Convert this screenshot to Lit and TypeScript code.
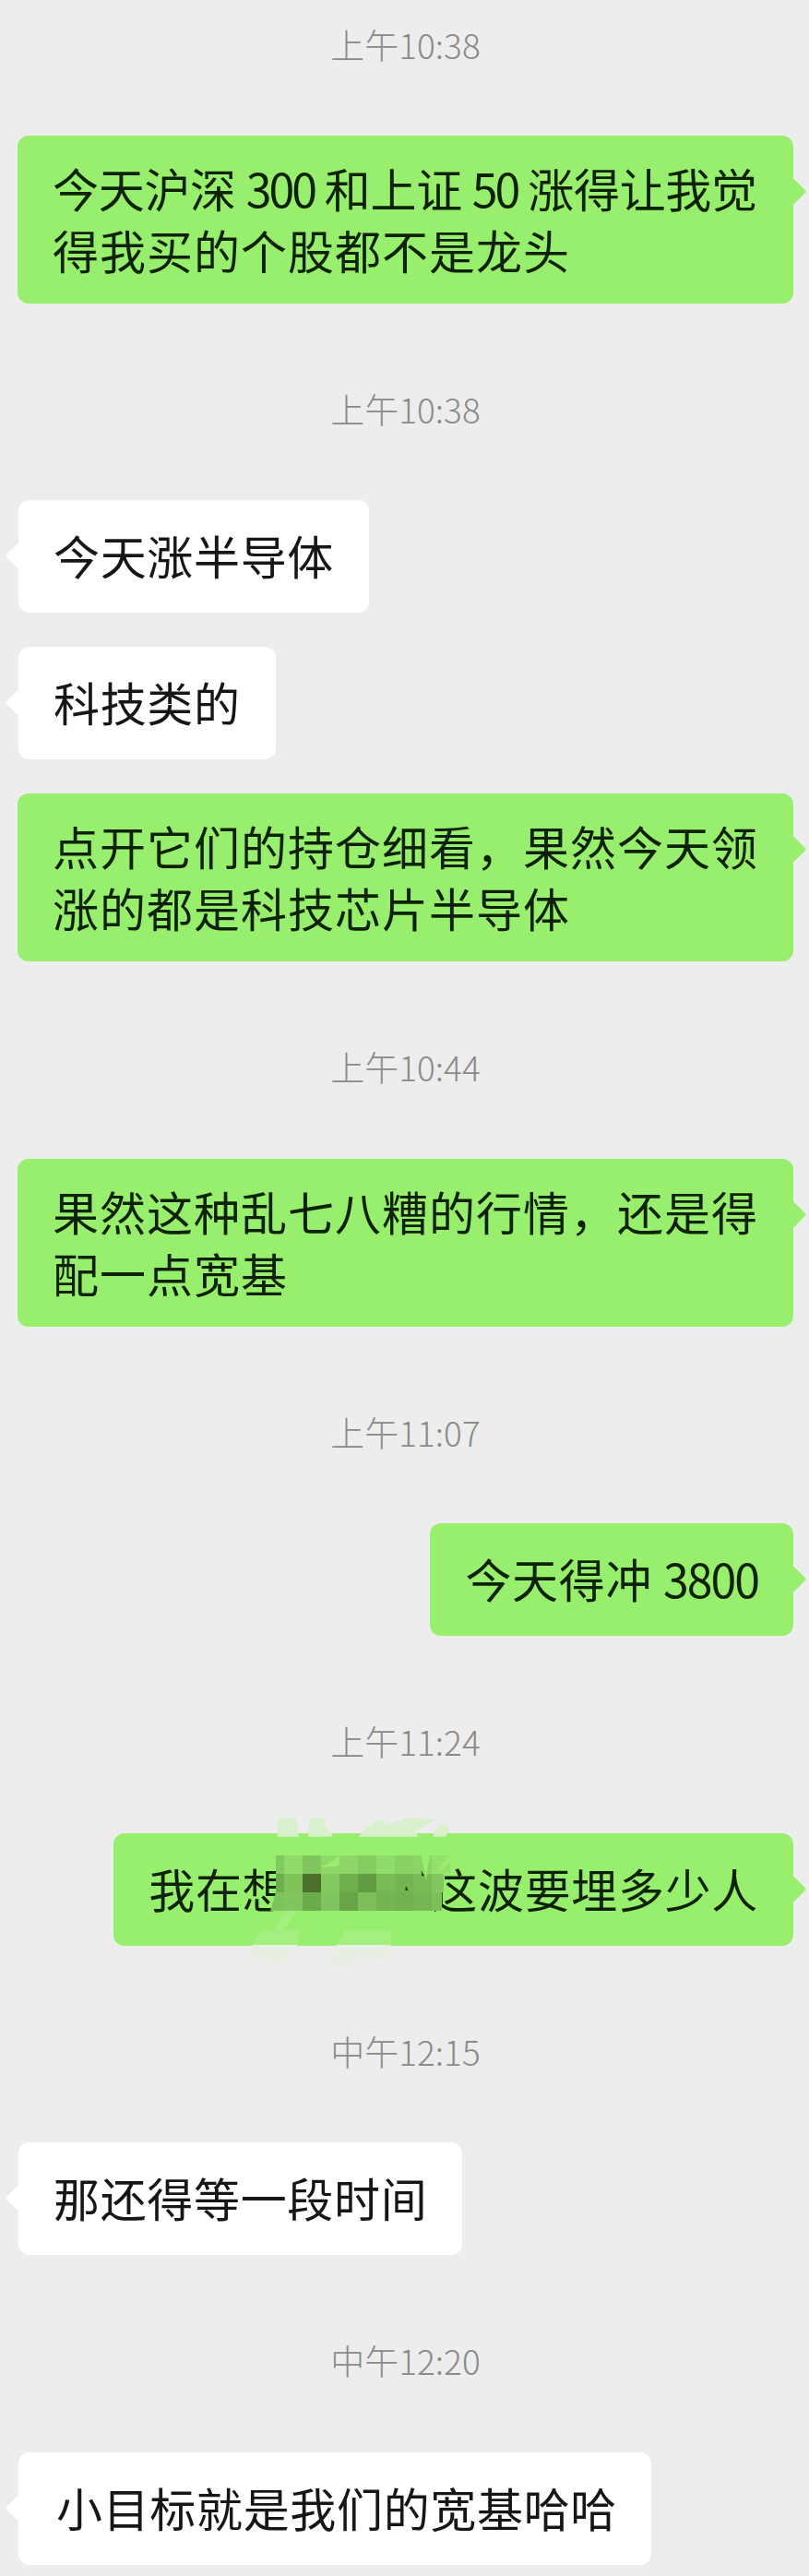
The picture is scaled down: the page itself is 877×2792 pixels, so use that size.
import { LitElement, html, css, svg } from "lit";
import { customElement } from "lit/decorators.js";

type Msg =
  | { t: "time"; text: string; first?: boolean }
  | { t: "me" | "other"; lines: string[]; shift?: boolean };

const COLS = [308, 328, 348, 368, 388, 408, 428, 448];
const ROWS: { y: number; left: string; cells: string[]; lead: [number, number]; tail: number; tailColor: string }[] = [
  {
    y: 2011,
    lead: [299, 299],
    left: "#84c860",
    cells: ["#90dc6a", "#80c55d", "#8dd868", "#8cd768", "#84cd60", "#90dc6b", "#88d265", "#8bd568"],
    tail: 20,
    tailColor: "#92e16c",
  },
  {
    y: 2031,
    lead: [299, 299],
    left: "#70ad4e",
    cells: ["#7fc35b", "#4b6f2c", "#84ca60", "#6fb04d", "#629c42", "#78bb55", "#74b551", "#78bb55"],
    tail: 13,
    tailColor: "#82c65f",
  },
  {
    y: 2051,
    lead: [299, 293],
    left: "#7dc25a",
    cells: ["#80c55d", "#6cab4b", "#80c55d", "#69a548", "#7dc05a", "#74b551", "#72b350", "#75b652"],
    tail: 11,
    tailColor: "#7dc05a",
  },
];

@customElement("app-root")
export class AppRoot extends LitElement {
  static styles = css`
    :host {
      display: block;
      position: relative;
      width: 877px;
      height: 2792px;
      overflow: hidden;
      background: #ededed;
      font-family: "Noto Sans CJK SC", "Noto Sans", sans-serif;
    }
    .list {
      display: flex;
      flex-direction: column;
      align-items: stretch;
      padding-top: 26px;
    }
    .time {
      height: 44px;
      line-height: 44px;
      margin: 92px 0 77.5px;
      padding-left: 2px;
      text-align: center;
      font-size: 37px;
      font-weight: 300;
      color: #8a8a8a;
      white-space: nowrap;
    }
    .time.first {
      margin-top: 0;
      margin-bottom: 76.5px;
    }
    .row {
      display: flex;
    }
    .row.me {
      justify-content: flex-end;
      padding-right: 17px;
    }
    .row.other {
      justify-content: flex-start;
      padding-left: 20px;
    }
    .row + .row {
      margin-top: 37px;
    }
    .bubble {
      position: relative;
      box-sizing: border-box;
      min-height: 122px;
      padding: 26px 38px 29px;
      border-radius: 12px;
      font-size: 50px;
      line-height: 67px;
      letter-spacing: 0.67px;
      color: #161616;
      white-space: nowrap;
    }
    .bubble.multi {
      width: 841px;
      padding: 23px 38px 25px;
      letter-spacing: 1px;
    }
    .bubble.shift {
      padding-left: 41px;
      padding-right: 37px;
    }
    .me .bubble {
      background: #98ee6d;
      color: #0d2204;
    }
    .other .bubble {
      background: #ffffff;
    }
    .bubble::after {
      content: "";
      position: absolute;
      top: 50px;
      width: 21px;
      height: 21px;
      border-radius: 3px;
      transform: rotate(45deg);
      background: inherit;
    }
    .me .bubble::after {
      right: -10px;
    }
    .other .bubble::after {
      left: -10px;
    }
    .tight {
      letter-spacing: -0.3px;
    }
    .num {
      letter-spacing: -3px;
    }
    .num.wide {
      letter-spacing: -2px;
    }
    .gap {
      display: inline-block;
      width: 154px;
    }
    .mark {
      position: absolute;
      left: 0;
      top: 0;
      pointer-events: none;
    }
  `;

  private msgs: Msg[] = [
    { t: "time", text: "上午10:38", first: true },
    {
      t: "me",
      lines: ["t:今天沪深 ", "n:300", "t: 和上证 ", "n:50", "t: 涨得让我觉", "br", "得我买的个股都不是龙头"],
    },
    { t: "time", text: "上午10:38" },
    { t: "other", lines: ["今天涨半导体"] },
    { t: "other", lines: ["科技类的"] },
    { t: "me", lines: ["点开它们的持仓细看，果然今天领", "br", "涨的都是科技芯片半导体"] },
    { t: "time", text: "上午10:44" },
    { t: "me", lines: ["果然这种乱七八糟的行情，还是得", "br", "配一点宽基"] },
    { t: "time", text: "上午11:07" },
    { t: "me", lines: ["今天得冲 ", "w:3800"] },
    { t: "time", text: "上午11:24" },
    { t: "me", lines: ["我在想", "gap", "这波要埋多少人"] },
    { t: "time", text: "中午12:15" },
    { t: "other", lines: ["那还得等一段时间"] },
    { t: "time", text: "中午12:20" },
    { t: "other", lines: ["小目标就是我们的宽基哈哈"], shift: true },
  ];

  private part(p: string) {
    if (p === "br") return html`<br />`;
    if (p === "gap") return html`<span class="gap"></span>`;
    if (p.startsWith("n:")) return html`<span class="num">${p.slice(2)}</span>`;
    if (p.startsWith("w:")) return html`<span class="num wide">${p.slice(2)}</span>`;
    if (p.startsWith("t:")) return html`<span class="tight">${p.slice(2)}</span>`;
    return p;
  }

  private mark() {
    const rects = ROWS.map((r) => {
      const [topX, botX] = r.lead;
      const end = 308 + COLS.length * 20;
      return svg`
        <path d="M${topX} ${r.y} L308 ${r.y} L308 ${r.y + 20} L${botX} ${r.y + 20}Z" fill=${r.left}></path>
        ${COLS.map((x, i) => svg`<rect x=${x} y=${r.y} width="20" height="20" fill=${r.cells[i]}></rect>`)}
        <rect x=${end} y=${r.y} width=${r.tail} height="20" fill=${r.tailColor}></rect>
      `;
    });
    return html`<svg class="mark" width="877" height="2792" viewBox="0 0 877 2792">
      <g transform="translate(260 1950) scale(0.33333)">
        <path d="M125 62 L182 62 L192 122 L122 122Z" fill="#d8f0cb"></path>
        <path d="M228 62 L275 62 L280 95 Q300 105 302 122 L222 122Z" fill="#d8f0cb"></path>
        <path d="M385 122 Q420 80 450 68 Q470 65 480 85 L540 62 L640 65 L570 105 L580 122Z" fill="#d8f0cb"></path>
        <path d="M628 122 Q635 90 655 80 Q680 80 680 100 L670 122Z" fill="#d8f0cb"></path>
        <path d="M122 62 L140 20 L180 30 L182 62Z M540 62 L620 10 L640 65Z" fill="#ebedea"></path>
        <path d="M40 473 L190 473 L150 525 Q120 540 90 520 L80 500 Q60 530 40 520Z" fill="#e6efe2"></path>
        <path d="M315 473 L490 473 L485 520 L400 530 L385 510 L340 550 L290 540Z" fill="#e8eee4"></path>
        <path d="M68 425 L110 425 L150 363 L190 363 L140 425 L195 425 L190 473 L40 473Z" fill="#a3ef80"></path>
        <path d="M345 425 L497 425 L490 473 L315 473Z" fill="#a3ef80"></path>
      </g>
      ${rects}
      <g transform="translate(260 1950) scale(0.33333)">
        <path d="M262 222 Q300 205 325 183 L322 218Z M590 183 L605 262 L618 183Z M680 183 L640 240 L690 200Z" fill="#98ee6d"></path>
        <path d="M540 282 L548 298 L538 296Z M590 232 L600 250 L592 250Z" fill="#16330a"></path>
      </g>
    </svg>`;
  }

  render() {
    return html`<div class="list">
        ${this.msgs.map((m) => {
          if (m.t === "time") {
            return html`<div class="time ${m.first ? "first" : ""}">${m.text}</div>`;
          }
          const multi = m.lines.includes("br");
          return html`<div class="row ${m.t}">
            <div class="bubble ${multi ? "multi" : ""} ${m.shift ? "shift" : ""}">
              ${m.lines.map((p) => this.part(p))}
            </div>
          </div>`;
        })}
      </div>
      ${this.mark()}`;
  }
}
